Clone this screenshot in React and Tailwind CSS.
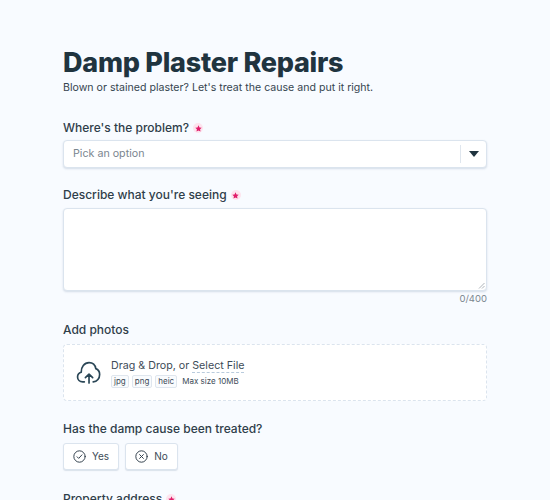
import React from "react";

function Req() {
  return (
    <span className="ml-[4px] inline-flex h-[10px] w-[10px] items-center justify-center rounded-full bg-[#fde4ee]">
      <svg width="7" height="7" viewBox="0 0 24 24" fill="#e11d6a"><path d="M12 1l3.400 7.200 7.600 1-5.600 5.400 1.500 7.800L12 18.600l-6.900 3.800 1.500-7.800L1 9.200l7.600-1z" /></svg>
    </span>
  );
}

function Label({ children, req }) {
  return (
    <div className="flex h-[20px] items-center text-[12px] font-medium leading-[20px] text-[#2f3e4a]">
      {children}
      {req && <Req />}
    </div>
  );
}

function Tag({ children }) {
  return <span className="rounded-[2px] border border-[#dfe6ee] bg-[#f9fbfd] px-[2px] text-[8px] leading-[11px] text-[#3d4b57]">{children}</span>;
}

export default function App() {
  return (
    <div className="h-[500px] overflow-hidden bg-[#f8fbff] pl-[63px] pr-[63px] pt-[46px] font-['Inter',sans-serif]">
      <h1 className="text-[27px] font-extrabold leading-[34px] tracking-[-0.25px] text-[#20343f]">Damp Plaster Repairs</h1>
      <p className="text-[10.6px] leading-[16px] text-[#36454f]">Blown or stained plaster? Let's treat the cause and put it right.</p>

      <div className="mt-[22px]"><Label req>Where's the problem?</Label></div>
      <div className="mt-[2px] flex h-[28px] items-center rounded-[4px] border border-[#dbe4ee] bg-white shadow-[0_1px_2px_rgba(130,150,175,0.3)]">
        <span className="flex-1 pl-[9px] pt-[1px] text-[10.7px] text-[#7b868f]">Pick an option</span>
        <span className="h-[18px] w-px bg-[#dfe6ee]" />
        <span className="flex w-[25px] items-center justify-center">
          <svg width="10" height="6" viewBox="0 0 10 6"><path d="M0 0h10L5 6z" fill="#20343f" /></svg>
        </span>
      </div>

      <div className="mt-[17px]"><Label req>Describe what you're seeing</Label></div>
      <div className="relative mt-[3px] h-[83px] rounded-[4px] border border-[#dbe4ee] bg-white shadow-[0_1px_2px_rgba(130,150,175,0.3)]">
        <svg className="absolute bottom-[1px] right-[1px]" width="7" height="7" viewBox="0 0 7 7"><path d="M1 6.500L6.500 1M4 6.500L6.500 4" stroke="#8a949c" strokeWidth="0.7" /></svg>
      </div>
      <div className="mt-[1px] text-right text-[9.5px] leading-[13px] text-[#7b868f]">0/400</div>

      <div className="mt-[15px]"><Label>Add photos</Label></div>
      <div className="mt-[4px] flex h-[57px] items-center rounded-[4px] border border-dashed border-[#dbe4ee] bg-white pl-[12px]">
        <svg width="25" height="25" viewBox="0 0 24 24" fill="none" stroke="#2a4656" strokeWidth="1.6" strokeLinecap="round" strokeLinejoin="round">
          <path d="M8 21H6.500C3.500 21 1.500 18.800 1.500 16.300c0-2.300 1.500-4 3.500-4.600C4.800 7 8 2.500 12.500 2.500c3.500 0 6 2.500 6.500 5.800 2.300.9 3.700 3 3.700 5.500 0 3.500-2.300 7.200-6.200 7.200" />
          <path d="M12.500 22v-8.500M9 17l3.500-3.500L16 17" />
        </svg>
        <div className="ml-[10px]">
          <div className="text-[10.7px] leading-[15px] text-[#3d4b57]">
            Drag &amp; Drop, or <span className="border-b border-dashed border-[#b9cbdd]">Select File</span>
          </div>
          <div className="mt-[2px] flex items-center gap-[3px]">
            <Tag>jpg</Tag><Tag>png</Tag><Tag>heic</Tag>
            <span className="ml-[2px] text-[8px] leading-[12px] text-[#3d4b57]">Max size 10MB</span>
          </div>
        </div>
      </div>

      <div className="mt-[18px]"><Label>Has the damp cause been treated?</Label></div>
      <div className="mt-[4px] flex gap-[6px]">
        <div className="flex h-[27px] w-[56px] items-center justify-center gap-[6px] rounded-[3px] border border-[#dbe4ee] bg-white text-[10px] text-[#3d4b57] shadow-[0_1px_1px_rgba(130,150,175,0.25)]">
          <svg width="13" height="13" viewBox="0 0 24 24" fill="none" stroke="#2f3e4a" strokeWidth="1.8" strokeLinecap="round" strokeLinejoin="round"><circle cx="12" cy="12" r="10.500" /><path d="M7.500 12.500l3 3 6-6.500" /></svg>
          Yes
        </div>
        <div className="flex h-[27px] w-[53px] items-center justify-center gap-[6px] rounded-[3px] border border-[#dbe4ee] bg-white text-[10px] text-[#3d4b57] shadow-[0_1px_1px_rgba(130,150,175,0.25)]">
          <svg width="13" height="13" viewBox="0 0 24 24" fill="none" stroke="#2f3e4a" strokeWidth="1.8" strokeLinecap="round"><circle cx="12" cy="12" r="10.500" /><path d="M8.500 8.500l7 7M15.500 8.500l-7 7" /></svg>
          No
        </div>
      </div>

      <div className="mt-[19px]"><Label req>Property address</Label></div>
    </div>
  );
}
